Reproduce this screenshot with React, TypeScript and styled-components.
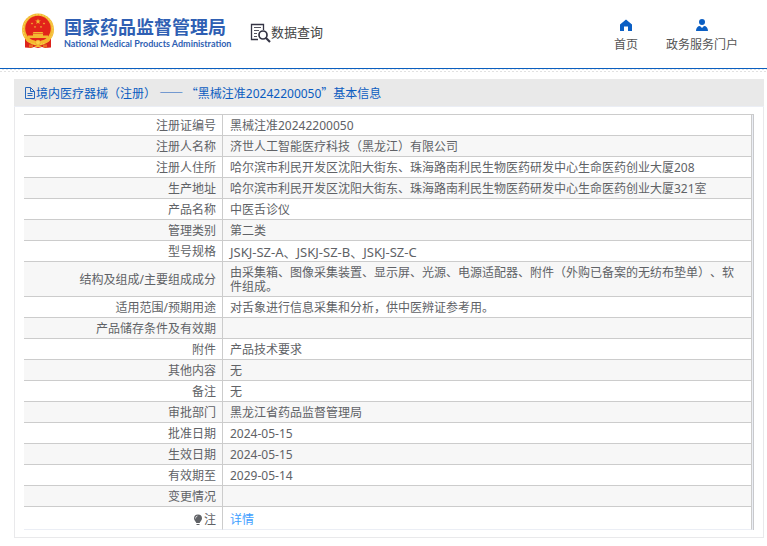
import React from "react";
import styled, { createGlobalStyle } from "styled-components";

const GlobalStyle = createGlobalStyle`
  * { box-sizing: border-box; }
  body {
    margin: 0;
    background: #fff;
    color: #606266;
    font-family: "Noto Sans", "Noto Sans CJK SC", sans-serif;
    font-size: 12px;
    line-height: 14px;
    text-spacing-trim: space-all;
  }
  a { color: inherit; text-decoration: none; }
`;

const Header = styled.header`
  display: flex;
  align-items: flex-start;
  height: 69px;
  padding: 0 29px 0 20px;
  border-bottom: 1px solid #0a5fc0;
`;

const Brand = styled.a`
  display: flex;
  align-items: flex-start;
  gap: 8px;
  padding-top: 12px;
`;

const BrandText = styled.span`
  display: flex;
  flex-direction: column;
  gap: 1px;
  width: 162px;
  padding-top: 3px;
  color: #2f5fb3;
  white-space: nowrap;
`;

const BrandName = styled.span`
  font: 700 18px/22px "Noto Sans CJK SC", sans-serif;
`;

const BrandEnglish = styled.span`
  font: 700 9px/12px Lato, sans-serif;
`;

const Section = styled.a`
  display: flex;
  align-items: center;
  margin: 22px 0 0 23px;
  color: #444;
  font: 400 13px/20px "Noto Sans CJK SC", sans-serif;
  white-space: nowrap;
`;

const SectionName = styled.span`
  padding-bottom: 2px;
`;

const Nav = styled.nav`
  display: flex;
  gap: 28px;
  margin-left: auto;
  padding-top: 18px;
`;

const NavLink = styled.a`
  display: flex;
  flex-direction: column;
  align-items: center;
  gap: 5px;
  color: #555;
  line-height: 16px;
  white-space: nowrap;
`;

const Hatch = styled.div`
  height: 3px;
  background: conic-gradient(#e2e2e2 25%, #fff 0 50%, #e2e2e2 0 75%, #fff 0) 0 0 / 4px 3px;
`;

const Panel = styled.main`
  margin: 7px 3px 8px 14px;
  border: 1px solid #e9e9eb;
  border-top: 0;
`;

const PanelTitle = styled.h1`
  display: flex;
  align-items: center;
  height: 28px;
  margin: 0 -1px;
  padding: 1px 10px 0;
  border-bottom: 1px solid #ebeef5;
  background: #e9e9e9;
  color: #0b5cc0;
  font-size: 12px;
  font-weight: 400;
  line-height: 16px;
  white-space: pre;
`;

const WidePunctuation = styled.span`
  font-family: "Noto Sans CJK SC", sans-serif;
`;

const TableFrame = styled.div`
  margin: 7px 9px;
  padding-right: 1px;
  border-top: 1px solid #ccc;
  border-right: 1px solid #c8c9cc;
  background: #ebeef5;
`;

const Table = styled.table`
  width: 100%;
  border-collapse: separate;
  border-spacing: 0;
  table-layout: fixed;
  background: #fff;
`;

const Row = styled.tr`
  &:nth-child(even) { background: #f7f7f7; }
  &:last-child > * { padding-top: 6px; border-bottom-color: #ebeef5; }
`;

const Label = styled.th`
  width: 199px;
  padding: 4px 6px 2px;
  border-right: 1px solid #ccc;
  border-bottom: 1px solid #ccc;
  font-weight: 400;
  text-align: right;
`;

const Value = styled.td<{ $latin?: boolean }>`
  height: 21px;
  padding: 4px 7px 2px;
  border-right: 1px solid #ccc;
  border-bottom: 1px solid #ccc;
  font-size: ${(p) => (p.$latin ? "13px" : "12px")};
`;

const LabelContent = styled.span`
  display: flex;
  align-items: center;
  justify-content: flex-end;
  gap: 1px;
`;

const DetailLink = styled.a`
  && { color: #409eff; }
`;

const star = (cx: number, cy: number, r: number) =>
  Array.from({ length: 10 }, (_, i) => {
    const a = (Math.PI / 5) * i - Math.PI / 2;
    const d = i % 2 ? r * 0.4 : r;
    return `${(cx + d * Math.cos(a)).toFixed(2)},${(cy + d * Math.sin(a)).toFixed(2)}`;
  }).join(" ");

const Emblem = () => (
  <svg width="36" height="38" viewBox="0 0 36 38" aria-hidden="true">
    <path d="M5 26v9.500l6 .5 3-1 4 1 4-1 3 1 6-.5V26z" fill="#dc231b" />
    <circle cx="18" cy="17.500" r="16" fill="#f3b932" />
    <circle cx="18" cy="17.500" r="14.800" fill="none" stroke="#fbd65a" strokeWidth="1" strokeDasharray="2 1.200" />
    <circle cx="18" cy="16.500" r="12.800" fill="#e2231a" />
    <g fill="#f3b932">
      <polygon points={star(18, 9.5, 3)} />
      <polygon points={star(12, 11.5, 1.3)} />
      <polygon points={star(24, 11.5, 1.3)} />
      <polygon points={star(15, 15, 1.3)} />
      <polygon points={star(21, 15, 1.3)} />
      <path d="M13.500 20h9l1 1.500h-11zM13 22h10v1.500h5V26H8v-2.500h5z" />
    </g>
    <path d="M5 25c4 5 9 2 13 5 4-3 9 0 13-5l-1.500 4c-3 3-7 1-9.500 3h-4c-2.500-2-6.500 0-9.500-3z" fill="#f5b82e" />
    <circle cx="18" cy="30.500" r="2.400" fill="#fbd04a" stroke="#e8952a" strokeWidth=".5" />
    <path d="M10 32.500v3M12 32.500v3M24 32.500v3M26 32.500v3" stroke="#f5b82e" />
    <path d="m14 35 4-2.500 4 2.500z" fill="#f5b82e" />
  </svg>
);

const SearchDocument = () => (
  <svg width="22" height="22" viewBox="0 0 22 22" fill="none" stroke="#343444" aria-hidden="true">
    <path d="M9 17.500H2.500v-15h12V8" strokeWidth="1.300" />
    <path d="M5 5.500h7M5 8.500h5M5 11.500h3M5 14.500h3" stroke="#555560" />
    <circle cx="14" cy="13" r="4" strokeWidth="1.700" />
    <path d="m17 16 4 4" strokeWidth="2.200" />
  </svg>
);

const HomeIcon = () => (
  <svg width="14" height="14" viewBox="0 0 14 14" fill="#0b5fc4" aria-hidden="true">
    <path d="M7 1.500 1 6.500V13h4V8.500h4V13h4V6.500z" />
  </svg>
);

const UserIcon = () => (
  <svg width="14" height="14" viewBox="0 0 14 14" fill="#0b5fc4" aria-hidden="true">
    <circle cx="7" cy="4" r="3" />
    <path d="M1 13c0-3 1.500-5 4-5l2 2 2-2c2.500 0 4 2 4 5z" />
  </svg>
);

const FileIcon = () => (
  <svg width="12" height="12" viewBox="0 0 12 12" fill="none" stroke="#2868bd" aria-hidden="true">
    <path d="M1.500.5h5l4 4v7h-9zM6.500.5v4h4M3.500 6.500h5M3.500 8.500h5" />
  </svg>
);

const BulbIcon = () => (
  <svg width="10" height="12" viewBox="0 0 10 12" fill="#606266" aria-hidden="true">
    <path d="M5 .5a4 4 0 0 0-4 4C1 6.500 3 7.500 3.300 9h3.400C7 7.500 9 6.500 9 4.500a4 4 0 0 0-4-4zM3.500 10h3v1h-3z" />
    <path d="M2.500 4.500A2.500 2.500 0 0 1 4.500 2" fill="none" stroke="#fff" strokeWidth=".7" />
  </svg>
);

type Entry = { label: string; value: string; latin?: boolean };

const rows: Entry[] = [
  { label: "注册证编号", value: "黑械注准20242200050" },
  { label: "注册人名称", value: "济世人工智能医疗科技（黑龙江）有限公司" },
  { label: "注册人住所", value: "哈尔滨市利民开发区沈阳大街东、珠海路南利民生物医药研发中心生命医药创业大厦208" },
  { label: "生产地址", value: "哈尔滨市利民开发区沈阳大街东、珠海路南利民生物医药研发中心生命医药创业大厦321室" },
  { label: "产品名称", value: "中医舌诊仪" },
  { label: "管理类别", value: "第二类" },
  { label: "型号规格", value: "JSKJ-SZ-A、JSKJ-SZ-B、JSKJ-SZ-C", latin: true },
  { label: "结构及组成/主要组成成分", value: "由采集箱、图像采集装置、显示屏、光源、电源适配器、附件（外购已备案的无纺布垫单）、软件组成。" },
  { label: "适用范围/预期用途", value: "对舌象进行信息采集和分析，供中医辨证参考用。" },
  { label: "产品储存条件及有效期", value: "" },
  { label: "附件", value: "产品技术要求" },
  { label: "其他内容", value: "无" },
  { label: "备注", value: "无" },
  { label: "审批部门", value: "黑龙江省药品监督管理局" },
  { label: "批准日期", value: "2024-05-15" },
  { label: "生效日期", value: "2024-05-15" },
  { label: "有效期至", value: "2029-05-14" },
  { label: "变更情况", value: "" },
];

export default function App() {
  return (
    <div lang="zh-CN">
      <GlobalStyle />
      <Header>
        <Brand href="#">
          <Emblem />
          <BrandText>
            <BrandName>国家药品监督管理局</BrandName>
            <BrandEnglish>National Medical Products Administration</BrandEnglish>
          </BrandText>
        </Brand>
        <Section href="#search">
          <SearchDocument />
          <SectionName>数据查询</SectionName>
        </Section>
        <Nav>
          <NavLink href="#home"><HomeIcon />首页</NavLink>
          <NavLink href="#portal"><UserIcon />政务服务门户</NavLink>
        </Nav>
      </Header>
      <Hatch />
      <Panel>
        <PanelTitle>
          <FileIcon />
          <span>境内医疗器械（注册） <WidePunctuation>—— “</WidePunctuation>黑械注准20242200050<WidePunctuation>”</WidePunctuation>基本信息</span>
        </PanelTitle>
        <TableFrame>
          <Table>
            <tbody>
              {rows.map(({ label, value, latin }) => (
                <Row key={label}>
                  <Label scope="row">{label}</Label>
                  <Value $latin={latin}>{value}</Value>
                </Row>
              ))}
              <Row>
                <Label scope="row"><LabelContent><BulbIcon />注</LabelContent></Label>
                <Value><DetailLink href="#detail">详情</DetailLink></Value>
              </Row>
            </tbody>
          </Table>
        </TableFrame>
      </Panel>
    </div>
  );
}
